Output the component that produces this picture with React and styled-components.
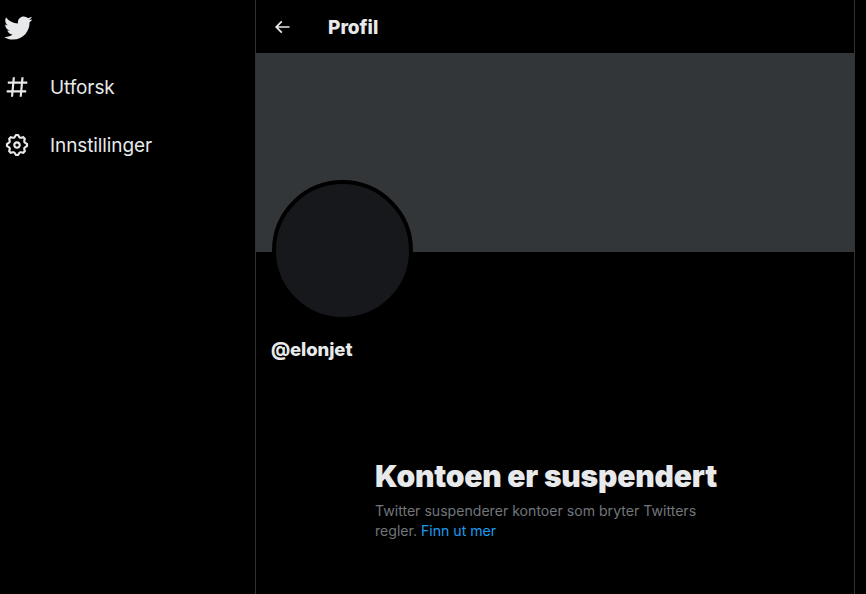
import React from 'react';
import styled, { createGlobalStyle } from 'styled-components';

const GlobalStyle = createGlobalStyle`
  html, body {
    margin: 0;
    height: 100%;
    background: #000;
    overflow: hidden;
  }
  body {
    font-family: Inter, "Liberation Sans", Arial, sans-serif;
    color: #e7e9ea;
  }
`;

const Page = styled.div`
  display: flex;
  width: 866px;
  height: 594px;
  background: #000;
`;

const Sidebar = styled.nav`
  width: 255px;
  flex-shrink: 0;
  display: flex;
  flex-direction: column;
`;

const Logo = styled.svg`
  width: 30px;
  height: 30px;
  margin: 13px 0 0 3px;
  fill: #e7e9ea;
`;

const NavList = styled.div`
  display: flex;
  flex-direction: column;
  margin-top: 15px;
`;

const NavItem = styled.div`
  display: flex;
  align-items: center;
  height: 58px;
  padding-left: 4px;
  gap: 20px;
  font-size: 19px;
  letter-spacing: -0.1px;
`;

const NavIcon = styled.svg`
  width: 26px;
  height: 26px;
  fill: #e7e9ea;
`;

const Main = styled.main`
  width: 598px;
  flex-shrink: 0;
  height: 594px;
  border-left: 1px solid #2f3336;
  border-right: 1px solid #2f3336;
`;

const TopBar = styled.header`
  display: flex;
  align-items: center;
  height: 53px;
  padding-left: 16px;
  gap: 36px;
`;

const BackIcon = styled.svg`
  width: 20px;
  height: 20px;
  fill: #e7e9ea;
`;

const Title = styled.h2`
  margin: 1px 0 0;
  font-size: 19px;
  font-weight: 800;
`;

const Banner = styled.div`
  height: 199px;
  background: #333639;
`;

const ProfileInfo = styled.div`
  padding: 0 15px;
`;

const Avatar = styled.div`
  box-sizing: border-box;
  width: 141px;
  height: 141px;
  margin: -72px 0 0 1px;
  border: 4px solid #000;
  border-radius: 50%;
  background: #16181c;
`;

const Handle = styled.div`
  margin-top: 16px;
  font-size: 18.5px;
  line-height: 24px;
  font-weight: 800;
  letter-spacing: -0.1px;
`;

const Notice = styled.section`
  width: 342px;
  margin: 97px 0 0 104px;
`;

const Heading = styled.h1`
  margin: 0;
  font-size: 30px;
  line-height: 36px;
  font-weight: 900;
  letter-spacing: -0.2px;
  white-space: nowrap;
`;

const Body = styled.p`
  margin: 7px 0 0;
  font-size: 14.1px;
  line-height: 20px;
  color: #71767b;
`;

const Link = styled.a`
  color: #1d9bf0;
  text-decoration: none;
`;

export default function App() {
  return (
    <Page>
      <GlobalStyle />
      <Sidebar>
        <Logo viewBox="0 0 24 24">
          <path d="M23.643 4.937c-.835.37-1.732.62-2.675.733.962-.576 1.7-1.49 2.048-2.578-.9.534-1.949.922-3.049 1.142-.85-.9-2.06-1.462-3.4-1.462-2.572 0-4.658 2.085-4.658 4.657 0 .365.041.72.12 1.061-3.871-.195-7.304-2.05-9.602-4.868-.4.69-.63 1.49-.63 2.342 0 1.616.823 3.043 2.072 3.878-.764-.025-1.482-.234-2.11-.583v.06c0 2.257 1.605 4.14 3.737 4.568-.392.106-.803.162-1.227.162-.3 0-.593-.028-.877-.082.593 1.85 2.313 3.198 4.352 3.234-1.595 1.25-3.604 1.995-5.786 1.995-.376 0-.747-.022-1.112-.065 2.062 1.323 4.51 2.093 7.14 2.093 8.57 0 13.255-7.098 13.255-13.254 0-.2-.005-.402-.014-.602.91-.658 1.7-1.477 2.323-2.41z" />
        </Logo>
        <NavList>
          <NavItem>
            <NavIcon viewBox="0 0 24 24">
              <path d="M10.09 3.098L9.72 7h5.99l.39-4.089 1.99.189L17.72 7h3.78v2h-3.97l-.56 6h3.53v2h-3.72l-.38 4.089-1.99-.189.36-3.9H8.78l-.38 4.089-1.99-.189L6.77 17H2.5v-2h4.46l.56-6H3.5V7h4.21l.39-4.089 1.99.187zM14.96 15l.56-6H9.53l-.56 6h5.99z" />
            </NavIcon>
            Utforsk
          </NavItem>
          <NavItem>
            <NavIcon viewBox="0 0 24 24">
              <path d="M10.54 1.75h2.92l1.57 2.36c.11.17.32.25.53.21l2.53-.59 2.17 2.17-.58 2.54c-.05.2.04.41.21.53l2.36 1.57v2.92l-2.36 1.57c-.17.12-.26.33-.21.53l.58 2.54-2.17 2.17-2.53-.59c-.21-.04-.42.04-.53.21l-1.57 2.36h-2.92l-1.58-2.36c-.11-.17-.32-.25-.52-.21l-2.54.59-2.17-2.17.58-2.54c.05-.2-.03-.41-.21-.53l-2.35-1.57v-2.92L4.1 8.97c.18-.12.26-.33.21-.53L3.73 5.9 5.9 3.73l2.54.59c.2.04.41-.04.52-.21l1.58-2.36zm1.07 2l-.98 1.47C10.05 6.08 9 6.5 7.99 6.27l-1.46-.34-.6.6.33 1.46c.24 1.01-.18 2.07-1.05 2.64l-1.46.98v.78l1.46.98c.87.57 1.29 1.63 1.05 2.64l-.33 1.46.6.6 1.46-.34c1.01-.23 2.06.19 2.64 1.05l.98 1.47h.78l.97-1.47c.58-.86 1.63-1.28 2.65-1.05l1.45.34.61-.6-.34-1.46c-.23-1.01.18-2.07 1.05-2.64l1.47-.98v-.78l-1.47-.98c-.87-.57-1.28-1.63-1.05-2.64l.34-1.46-.61-.6-1.45.34c-1.02.23-2.07-.19-2.65-1.05l-.97-1.47h-.78zM12 10.5c-.83 0-1.5.67-1.5 1.5s.67 1.5 1.5 1.5c.82 0 1.5-.67 1.5-1.5s-.68-1.5-1.5-1.5zM8.5 12c0-1.93 1.56-3.5 3.5-3.5 1.93 0 3.5 1.57 3.5 3.5s-1.57 3.5-3.5 3.5c-1.94 0-3.5-1.57-3.5-3.5z" />
            </NavIcon>
            Innstillinger
          </NavItem>
        </NavList>
      </Sidebar>
      <Main>
        <TopBar>
          <BackIcon viewBox="0 0 24 24">
            <path d="M7.414 13l5.043 5.04-1.414 1.42L3.586 12l7.457-7.46 1.414 1.42L7.414 11H21v2H7.414z" />
          </BackIcon>
          <Title>Profil</Title>
        </TopBar>
        <Banner />
        <ProfileInfo>
          <Avatar />
          <Handle>@elonjet</Handle>
          <Notice>
            <Heading>Kontoen er suspendert</Heading>
            <Body>
              Twitter suspenderer kontoer som bryter Twitters regler. <Link href="#">Finn ut mer</Link>
            </Body>
          </Notice>
        </ProfileInfo>
      </Main>
    </Page>
  );
}
